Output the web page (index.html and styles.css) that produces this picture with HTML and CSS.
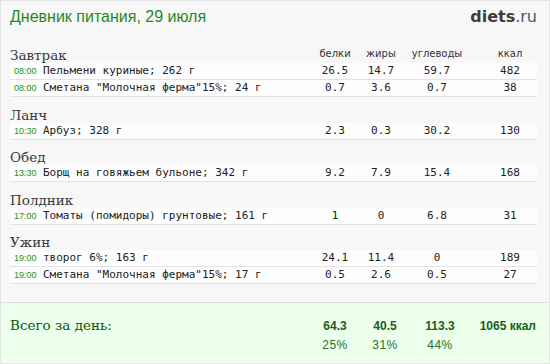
FILE: index.html
```html
<!DOCTYPE html>
<html lang="ru">
<head>
<meta charset="utf-8">
<title>Дневник питания</title>
<link rel="stylesheet" href="styles.css">
</head>
<body>
<div class="page">
  <header class="top">
    <h1 class="title">Дневник питания, 29 июля</h1>
    <div class="logo"><b>diets</b>.ru</div>
  </header>

  <section class="meal">
    <div class="meal-head first">
      <h2 class="meal-name">Завтрак</h2>
      <span class="col">белки</span><span class="col">жиры</span><span class="col">углеводы</span><span class="col last">ккал</span>
    </div>
    <div class="row"><span class="name"><span class="time">08:00</span>Пельмени куриные; 262 г</span><span class="col">26.5</span><span class="col">14.7</span><span class="col">59.7</span><span class="col last">482</span></div>
    <div class="row"><span class="name"><span class="time">08:00</span>Сметана "Молочная ферма"15%; 24 г</span><span class="col">0.7</span><span class="col">3.6</span><span class="col">0.7</span><span class="col last">38</span></div>
  </section>

  <section class="meal">
    <div class="meal-head"><h2 class="meal-name">Ланч</h2></div>
    <div class="row"><span class="name"><span class="time">10:30</span>Арбуз; 328 г</span><span class="col">2.3</span><span class="col">0.3</span><span class="col">30.2</span><span class="col last">130</span></div>
  </section>

  <section class="meal">
    <div class="meal-head"><h2 class="meal-name">Обед</h2></div>
    <div class="row"><span class="name"><span class="time">13:30</span>Борщ на говяжьем бульоне; 342 г</span><span class="col">9.2</span><span class="col">7.9</span><span class="col">15.4</span><span class="col last">168</span></div>
  </section>

  <section class="meal">
    <div class="meal-head"><h2 class="meal-name">Полдник</h2></div>
    <div class="row"><span class="name"><span class="time">17:00</span>Томаты (помидоры) грунтовые; 161 г</span><span class="col">1</span><span class="col">0</span><span class="col">6.8</span><span class="col last">31</span></div>
  </section>

  <section class="meal">
    <div class="meal-head"><h2 class="meal-name">Ужин</h2></div>
    <div class="row"><span class="name"><span class="time">19:00</span>творог 6%; 163 г</span><span class="col">24.1</span><span class="col">11.4</span><span class="col">0</span><span class="col last">189</span></div>
    <div class="row"><span class="name"><span class="time">19:00</span>Сметана "Молочная ферма"15%; 17 г</span><span class="col">0.5</span><span class="col">2.6</span><span class="col">0.5</span><span class="col last">27</span></div>
  </section>

  <section class="totals">
    <div class="total-label">Всего за день:</div>
    <div class="tnum">64.3</div>
    <div class="tnum">40.5</div>
    <div class="tnum">113.3</div>
    <div class="tnum tkcal">1065 ккал</div>
    <div></div>
    <div class="tpct">25%</div>
    <div class="tpct">31%</div>
    <div class="tpct">44%</div>
    <div></div>
  </section>
</div>
</body>
</html>
```

FILE: styles.css
```css
* { box-sizing: border-box; }
html, body { margin: 0; padding: 0; background: #f7f7f7; }
.page {
  width: 550px;
  height: 364px;
  border: 1px solid #e4e4e4;
  background: #f7f7f7;
  display: flex;
  flex-direction: column;
  overflow: hidden;
}
.top {
  height: 36px;
  padding: 7px 12px 0 9px;
  display: flex;
  justify-content: space-between;
  align-items: baseline;
}
.title {
  margin: 0;
  font-family: "Liberation Sans", Arial, sans-serif;
  font-weight: normal;
  font-size: 16px;
  line-height: 18px;
  color: #1f8a1f;
}
.logo {
  font-family: "DejaVu Sans", Verdana, sans-serif;
  font-size: 16px;
  line-height: 18px;
  color: #555;
}
.logo b { color: #3d3d3d; font-weight: bold; }

.meal { padding: 0 12px 0 9px; }
.meal-head, .row {
  display: grid;
  grid-template-columns: 1fr 46px 46px 66px 67px;
}
.meal-head {
  height: 25.5px;
  align-items: end;
}
.meal-head.first { height: 26px; }
.meal-name {
  margin: 0;
  font-family: "DejaVu Serif", Georgia, serif;
  font-weight: normal;
  font-size: 13.5px;
  line-height: 16px;
  color: #3a3a3a;
}
.meal-head .col {
  font-family: "DejaVu Sans", Verdana, sans-serif;
  font-size: 10px;
  line-height: 16px;
  padding-bottom: 1px;
  color: #333;
  text-align: center;
}
.meal-head .col.last, .row .col.last { padding-left: 13px; }

.row {
  height: 17px;
  background: #fdfdfd;
  border-bottom: 1px solid #e2e2e2;
  font-family: "DejaVu Sans Mono", monospace;
  font-size: 11px;
  line-height: 16px;
  color: #222;
}
.row .col { text-align: center; }
.name { padding-left: 4px; white-space: nowrap; }
.time {
  display: inline-block;
  width: 29px;
  font-family: "Liberation Sans", Arial, sans-serif;
  font-size: 9px;
  color: #1a921a;
}

.totals {
  margin-top: auto;
  height: 61px;
  border-top: 1px solid #dedede;
  background: #ebffeb;
  padding: 13px 13px 0 9px;
  display: grid;
  grid-template-columns: 1fr 50px 50px 60px 66px;
  grid-template-rows: 18px 18px;
  row-gap: 2px;
  align-items: baseline;
  font-family: "Liberation Sans", Arial, sans-serif;
  font-size: 12px;
  line-height: 18px;
}
.total-label {
  font-family: "DejaVu Serif", Georgia, serif;
  font-size: 13.5px;
  color: #0d560d;
}
.tnum { font-weight: bold; color: #1b5e1b; text-align: center; }
.tkcal { text-align: right; white-space: nowrap; }
.tpct { color: #2a6e2a; text-align: center; letter-spacing: 0.5px; }
```
